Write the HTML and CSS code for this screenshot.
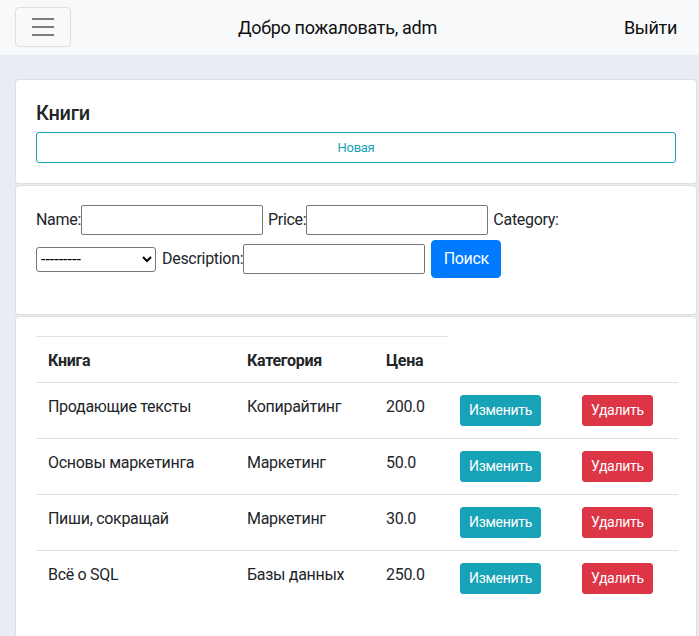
FILE: index.html
```html
<!DOCTYPE html>
<html lang="ru">
<head>
<meta charset="utf-8">
<title>Книги</title>
<link rel="stylesheet" href="styles.css">
</head>
<body>
<nav class="navbar">
  <button class="toggler" type="button" aria-label="Меню">
    <svg class="toggler-icon" width="30" height="30" viewBox="0 0 30 30"><path d="M4 7h22M4 15h22M4 23h22" stroke="rgba(0,0,0,0.5)" stroke-width="2" stroke-linecap="butt" fill="none"/></svg>
  </button>
  <span class="welcome">Добро пожаловать, adm</span>
  <a class="logout" href="#">Выйти</a>
</nav>
<main class="container">
  <section class="card">
    <div class="card-body head-body">
      <h5 class="card-title">Книги</h5>
      <button class="btn-outline" type="button">Новая</button>
    </div>
  </section>
  <section class="card">
    <form class="card-body search-form">
      <div class="form-row">
        <label class="lbl">Name:</label><input class="inp" type="text">
        <label class="lbl sp">Price:</label><input class="inp" type="text">
        <label class="lbl sp">Category:</label>
      </div>
      <div class="form-row row2">
        <select class="sel"><option>---------</option></select>
        <label class="lbl sp">Description:</label><input class="inp" type="text">
        <button class="btn-primary" type="button">Поиск</button>
      </div>
    </form>
  </section>
  <section class="card card-last">
    <div class="card-body table-body">
      <table class="table">
        <colgroup>
          <col class="c1"><col class="c2"><col class="c3"><col class="c4"><col class="c5">
        </colgroup>
        <thead>
          <tr><th>Книга</th><th>Категория</th><th>Цена</th></tr>
        </thead>
        <tbody>
          <tr><td>Продающие тексты</td><td>Копирайтинг</td><td>200.0</td><td><button class="btn-sm btn-info">Изменить</button></td><td><button class="btn-sm btn-danger">Удалить</button></td></tr>
          <tr><td>Основы маркетинга</td><td>Маркетинг</td><td>50.0</td><td><button class="btn-sm btn-info">Изменить</button></td><td><button class="btn-sm btn-danger">Удалить</button></td></tr>
          <tr><td>Пиши, сокращай</td><td>Маркетинг</td><td>30.0</td><td><button class="btn-sm btn-info">Изменить</button></td><td><button class="btn-sm btn-danger">Удалить</button></td></tr>
          <tr><td>Всё о SQL</td><td>Базы данных</td><td>250.0</td><td><button class="btn-sm btn-info">Изменить</button></td><td><button class="btn-sm btn-danger">Удалить</button></td></tr>
        </tbody>
      </table>
    </div>
  </section>
</main>
</body>
</html>
```
FILE: styles.css
```css
* { box-sizing: border-box; }
html, body { margin: 0; padding: 0; }
body {
  font-family: "Segoe UI", Roboto, "Noto Sans", sans-serif;
  font-size: 16px;
  line-height: 1.5;
  letter-spacing: -0.3px;
  color: #212529;
  background: #eaecf3;
  height: 636px;
  overflow: hidden;
}
.navbar {
  display: flex;
  align-items: center;
  height: 55px;
  padding: 7px 22px 8px 15px;
  background: #f8f9fa;
}
.toggler {
  width: 56px;
  height: 40px;
  padding: 4px 12px;
  background: transparent;
  border: 1px solid rgba(0,0,0,0.1);
  border-radius: 4px;
  display: flex;
  align-items: center;
  justify-content: center;
}
.toggler-icon { display: block; }
.welcome {
  flex: 1;
  text-align: center;
  font-size: 18px;
  color: #111;
  padding-right: 20px;
}
.logout {
  font-size: 18px;
  color: #111;
  text-decoration: none;
}
.container {
  padding: 24px 2px 0 15px;
  display: flex;
  flex-direction: column;
  gap: 1px;
}
.card {
  background: #fff;
  border: 1px solid rgba(0,0,0,0.125);
  border-radius: 4px;
}
.card-body { padding: 20px; }
.card-title {
  margin: 1px 0 7px;
  font-size: 20px;
  font-weight: 500;
  line-height: 24px;
}
.btn-outline {
  display: block;
  width: 100%;
  height: 31px;
  font-family: inherit;
  font-size: 13px;
  line-height: 1.5;
  letter-spacing: inherit;
  color: #17a2b8;
  background: transparent;
  border: 1px solid #17a2b8;
  border-radius: 3px;
  padding: 4px 8px;
}
.search-form {
  padding: 19px 20px 36px;
  margin: 0;
}
.form-row {
  display: flex;
  align-items: center;
  height: 30px;
}
.row2 {
  margin-top: 5px;
  height: 38px;
}
.lbl { white-space: pre; }
.sp { margin-left: 5px; }
.inp {
  width: 182px;
  height: 30px;
  border: 1px solid #767676;
  border-radius: 2px;
  padding: 1px 2px;
  font-family: inherit;
  font-size: 16px;
  background: #fff;
}
.sel {
  width: 120px;
  height: 25px;
  border: 1px solid #767676;
  border-radius: 3px;
  font-family: inherit;
  font-size: 16px;
  line-height: 1;
  color: #000;
  background: #fff;
}
.row2 .sp { margin-left: 6px; }
.btn-primary {
  margin-left: 6px;
  width: 70px;
  height: 38px;
  font-family: inherit;
  font-size: 16px;
  line-height: 1.5;
  letter-spacing: inherit;
  color: #fff;
  background: #007bff;
  border: 1px solid #007bff;
  border-radius: 4px;
  padding: 6px 8px;
}
.card-last { flex: 1; min-height: 340px; }
.table-body { padding: 19px 20px 20px; }
.table {
  width: 100%;
  table-layout: fixed;
  border-collapse: collapse;
}
.c1 { width: 199px; }
.c2 { width: 139px; }
.c3 { width: 74px; }
.c4 { width: 122px; }
.c5 { width: 108px; }
.table th {
  text-align: left;
  font-weight: 700;
  padding: 12px 12px 9px;
  border-top: 1px solid #dee2e6;
  line-height: 24px;
  vertical-align: bottom;
}
.table td {
  padding: 12px;
  border-top: 1px solid #dee2e6;
  vertical-align: top;
  line-height: 24px;
  white-space: nowrap;
}
.btn-sm {
  display: inline-block;
  height: 31px;
  padding: 4px 8px;
  font-family: inherit;
  font-size: 14px;
  line-height: 21px;
  letter-spacing: inherit;
  color: #fff;
  border-radius: 3px;
  border: 1px solid transparent;
  vertical-align: top;
}
.btn-info { background: #17a2b8; border-color: #17a2b8; }
.btn-danger { background: #dc3545; border-color: #dc3545; }
```
